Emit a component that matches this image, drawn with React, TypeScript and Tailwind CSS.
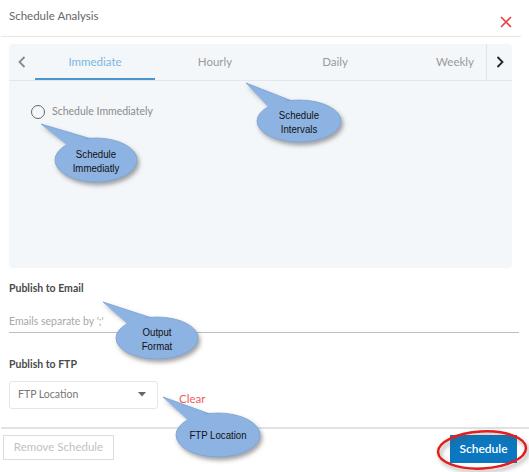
import React from 'react';

const font = { fontFamily: 'Lato, "Noto Sans", sans-serif' };

type CalloutProps = {
  cx: number;
  cy: number;
  rx: number;
  ry: number;
  tip: [number, number];
  base: [number, number][];
  lines: string[];
};

const callouts: CalloutProps[] = [
  { cx: 299, cy: 121, rx: 42, ry: 21, tip: [246, 83], base: [[272, 108], [292, 101]], lines: ['Schedule', 'Intervals'] },
  { cx: 96, cy: 160, rx: 41, ry: 22, tip: [41, 124], base: [[72, 146], [95, 140]], lines: ['Schedule', 'Immediatly'] },
  { cx: 157, cy: 338, rx: 41, ry: 21, tip: [103, 302], base: [[132, 325], [152, 318]], lines: ['Output', 'Format'] },
  { cx: 218, cy: 435, rx: 42, ry: 22, tip: [163, 397], base: [[192, 421], [210, 414]], lines: ['FTP Location'] },
];

const Annotations: React.FC = () => (
  <svg className="absolute inset-0 pointer-events-none" width={529} height={472} viewBox="0 0 529 472">
    <defs>
      <filter id="shadow" x="-30%" y="-30%" width="160%" height="160%">
        <feDropShadow dx="2" dy="3" stdDeviation="2" floodColor="#555" floodOpacity="0.55" />
      </filter>
    </defs>
    {callouts.map((c, i) => (
      <g key={i}>
        <g filter="url(#shadow)">
          <polygon
            points={`${c.tip[0]},${c.tip[1]} ${c.base[0][0]},${c.base[0][1]} ${c.base[1][0]},${c.base[1][1]}`}
            fill="#8db3e2"
            stroke="#7a9fd0"
            strokeWidth={0.8}
          />
          <ellipse cx={c.cx} cy={c.cy} rx={c.rx} ry={c.ry} fill="#8db3e2" stroke="#7a9fd0" strokeWidth={0.8} />
        </g>
        <polygon
          points={`${c.tip[0] + 1},${c.tip[1] + 1} ${c.base[0][0]},${c.base[0][1] + 3} ${c.base[1][0]},${c.base[1][1] + 3}`}
          fill="#8db3e2"
        />
        {c.lines.map((l, j) => (
          <text
            key={j}
            x={c.cx}
            y={c.cy + (c.lines.length === 1 ? 4 : j === 0 ? -2 : 12)}
            textAnchor="middle"
            fontSize={11.5}
            fill="#111"
            style={{ fontFamily: '"Liberation Sans Narrow", "Liberation Sans", sans-serif' }}
            transform={`translate(${c.cx} 0) scale(0.84 1) translate(${-c.cx} 0)`}
          >
            {l}
          </text>
        ))}
      </g>
    ))}
    <g filter="url(#shadow)">
      <ellipse
        cx={482}
        cy={450}
        rx={44}
        ry={18.5}
        fill="none"
        stroke="#e41c1c"
        strokeWidth={2.5}
        transform="rotate(-3 482 450)"
      />
    </g>
  </svg>
);

const Chevron: React.FC<{ dir: 'left' | 'right'; color: string }> = ({ dir, color }) => (
  <svg width="8" height="12" viewBox="0 0 8 12">
    <path
      d={dir === 'left' ? 'M6.5 1 L1.5 6 L6.5 11' : 'M1.5 1 L6.5 6 L1.5 11'}
      fill="none"
      stroke={color}
      strokeWidth="1.8"
    />
  </svg>
);

const tabs = ['Immediate', 'Hourly', 'Daily', 'Weekly'];

export default function App() {
  return (
    <div className="relative w-[529px] h-[472px] bg-white overflow-hidden" style={font}>
      {/* header */}
      <div className="ml-[1px] w-[520px] h-[37px] border-b border-[#e6e6e6] flex justify-between">
        <div className="pl-[8px] pt-[7px] text-[11.5px] text-[#666]">Schedule Analysis</div>
        <div className="pt-[16px] pr-[9px]">
          <svg width="12" height="12" viewBox="0 0 12 12">
            <path d="M1 1 L11 11 M11 1 L1 11" stroke="#e84343" strokeWidth="1.6" />
          </svg>
        </div>
      </div>

      {/* tab panel */}
      <div className="ml-[9px] mt-[7px] w-[503px] h-[224px] rounded-[4px] bg-[#f4f7fa]">
        <div className="flex h-[37px] border-b border-[#e3e7eb]">
          <div className="w-[26px] flex items-center justify-center">
            <Chevron dir="left" color="#888" />
          </div>
          <div className="flex-1 flex overflow-hidden">
            {tabs.map((t, i) => (
              <div
                key={t}
                className={
                  i === 0
                    ? 'w-[120px] shrink-0 flex items-center justify-center pt-[2px] text-[11.5px] text-[#7db6df] border-b-2 border-[#4a97cf]'
                    : 'w-[120px] shrink-0 flex items-center justify-center pt-[2px] text-[11.5px] text-[#9a9a9a] border-b-2 border-transparent'
                }
              >
                {t}
              </div>
            ))}
          </div>
          <div className="w-[26px] flex items-center justify-center border-l border-[#e0e4e8]">
            <Chevron dir="right" color="#222" />
          </div>
        </div>
        <div className="flex items-center gap-[7px] pl-[22px] pt-[23px]">
          <div className="w-[14px] h-[14px] rounded-full border-[1.5px] border-[#666]" />
          <span className="text-[10.5px] text-[#8a8a8a]">Schedule Immediately</span>
        </div>
      </div>

      {/* publish to email */}
      <div className="ml-[9px] mt-[13px] text-[10.5px] font-bold text-[#4a4a4a]">Publish to Email</div>
      <div className="ml-[9px] mt-[17px] w-[510px] h-[19px] border-b border-[#bdbdbd] text-[10.5px] text-[#a8a8a8]">
        Emails separate by ';'
      </div>

      {/* publish to ftp */}
      <div className="ml-[9px] mt-[24px] text-[10.5px] font-bold text-[#4a4a4a]">Publish to FTP</div>
      <div className="flex items-center mt-[8px]">
        <div className="ml-[9px] w-[149px] h-[28px] rounded-[3px] border border-[#e6e6e6] flex items-center justify-between pl-[8px] pr-[11px]">
          <span className="text-[10.5px] text-[#777]">FTP Location</span>
          <svg width="8" height="5" viewBox="0 0 8 5">
            <path d="M0 0 L8 0 L4 4.5 Z" fill="#666" />
          </svg>
        </div>
        <span className="ml-[21px] mt-[8px] text-[11.5px] text-[#f25c5c]">Clear</span>
      </div>

      {/* footer */}
      <div className="ml-[1px] mt-[18px] w-[528px] border-t-2 border-[#e2e2e2]" />
      <div className="flex justify-between items-start mt-[6px]">
        <div className="ml-[3px] w-[111px] h-[25px] border border-[#dcdcdc] flex items-center justify-center text-[11.5px] text-[#c2c2c2]">
          Remove Schedule
        </div>
        <div className="mr-[12px] w-[67px] h-[28px] bg-[#0a77c0] flex items-center justify-center text-[12px] font-semibold text-white">
          Schedule
        </div>
      </div>

      <Annotations />
    </div>
  );
}
